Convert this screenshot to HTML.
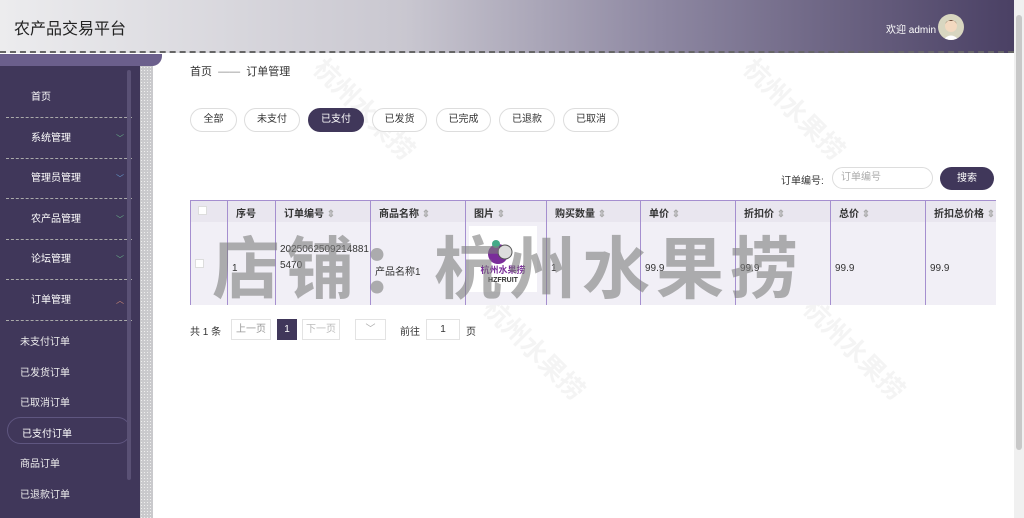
<!DOCTYPE html>
<html><head><meta charset="utf-8"><style>
*{margin:0;padding:0;box-sizing:border-box}
html,body{width:1024px;height:518px;overflow:hidden}
body{font-family:"Liberation Sans","Noto Sans CJK SC",sans-serif;background:#fff;position:relative;font-size:10px;color:#333}
.hdr{position:absolute;left:0;top:0;width:1014px;height:53px;background:linear-gradient(90deg,#ececee 0%,#c9c7d0 40%,#8e88a2 65%,#4a4064 100%);border-bottom:2px dashed #666}
.hdr .t{position:absolute;left:14px;top:15px;font-size:16px;color:#222}
.hdr .w{position:absolute;left:886px;top:21px;font-size:10px;color:#fff}
.av{position:absolute;left:938px;top:14px;width:26px;height:26px;border-radius:50%;background:#d8d6c0;overflow:hidden}
.sb{position:absolute;right:0;top:0;width:10px;height:518px;background:#f0f0f0}
.sb i{position:absolute;left:2px;top:15px;width:6px;height:435px;background:#c8c8c8;border-radius:3px}
.side{position:absolute;left:0;top:55px;width:140px;height:463px;background:#40375a;overflow:hidden}
.tab{position:absolute;left:0;top:54px;width:162px;height:12px;background:#6b5f8c;border-radius:0 0 10px 0}
.strip{position:absolute;left:140px;top:66px;width:13px;height:452px;background:#c9c9cc;background-image:radial-gradient(#eee 0.6px,transparent 0.8px);background-size:3px 3px}
.mi{position:absolute;left:6px;width:126px;height:40px;border-bottom:1px dashed #aaa;color:#fff;font-size:10px;padding-left:25px;line-height:40px}
.mi b{position:absolute;right:8px;font-weight:normal;color:#6a8;font-size:8px}
.si{position:absolute;left:20px;color:#eee;font-size:10px}
.sscroll{position:absolute;left:127px;top:15px;width:4px;height:410px;background:#5a5175;border-radius:2px}
.bc{position:absolute;left:190px;top:63px;font-size:11px;color:#333}
.pill{position:absolute;top:108px;height:24px;border:1px solid #ddd;border-radius:12px;font-size:10px;line-height:22px;text-align:center;background:#fff}
.pill.on{background:#40375a;color:#fff;border-color:#40375a}
.cell{position:absolute;border-left:1px solid #a58fcf;font-size:10px;padding-left:8px}
.cell .h{margin-top:5px;font-weight:bold;white-space:nowrap}
.wm{position:absolute;left:212px;top:214px;font-size:68px;font-weight:bold;color:rgba(125,125,125,.6);letter-spacing:6px;white-space:nowrap}
.fw{position:absolute;font-size:26px;font-weight:bold;color:rgba(170,170,170,.13);transform:rotate(45deg);white-space:nowrap}
.pg{position:absolute;top:319px;height:21px;border:1px solid #e3e3e3;font-size:10px;line-height:19px;text-align:center;color:#999;background:#fff}
</style></head><body>
<div class="hdr"><div class="t">农产品交易平台</div><div class="w">欢迎 admin</div>
<div class="av"><svg width="26" height="26"><circle cx="13" cy="12" r="6" fill="#f3d9c0"/><path d="M7 10 Q13 2 19 10 Q17 6 13 7 Q9 6 7 10Z" fill="#5a3a2a"/><path d="M5 26 Q13 17 21 26Z" fill="#fff"/></svg></div></div>
<div class="sb"><i></i></div>
<div class="side">
<div class="mi" style="top:23px">首页</div>
<div class="mi" style="top:64px">系统管理<b>﹀</b></div>
<div class="mi" style="top:104px">管理员管理<b style="color:#69c">﹀</b></div>
<div class="mi" style="top:145px">农产品管理<b>﹀</b></div>
<div class="mi" style="top:185px">论坛管理<b>﹀</b></div>
<div class="mi" style="top:226px">订单管理<b style="color:#c87">︿</b></div>
<div class="si" style="top:278px">未支付订单</div>
<div class="si" style="top:309px">已发货订单</div>
<div class="si" style="top:339px">已取消订单</div>
<div style="position:absolute;left:7px;top:362px;width:124px;height:27px;border:1px solid #5f5680;border-radius:14px"></div>
<div class="si" style="top:370px;left:22px;color:#fff">已支付订单</div>
<div class="si" style="top:400px">商品订单</div>
<div class="si" style="top:431px">已退款订单</div>
<div class="sscroll"></div>
</div>
<div class="tab"></div>
<div class="strip"></div>
<div class="fw" style="left:300px;top:90px">杭州水果捞</div>
<div class="fw" style="left:730px;top:90px">杭州水果捞</div>
<div class="fw" style="left:470px;top:330px">杭州水果捞</div>
<div class="fw" style="left:790px;top:330px">杭州水果捞</div>
<div class="bc">首页 <span style="color:#888">&nbsp;——&nbsp;</span> 订单管理</div>
<div class="pill" style="left:190px;width:47px">全部</div>
<div class="pill" style="left:244px;width:56px">未支付</div>
<div class="pill on" style="left:308px;width:56px">已支付</div>
<div class="pill" style="left:372px;width:55px">已发货</div>
<div class="pill" style="left:436px;width:55px">已完成</div>
<div class="pill" style="left:499px;width:56px">已退款</div>
<div class="pill" style="left:563px;width:56px">已取消</div>
<div style="position:absolute;left:781px;top:172px;font-size:10px">订单编号:</div>
<div style="position:absolute;left:832px;top:167px;width:101px;height:22px;border:1px solid #ddd;border-radius:11px;font-size:10px;color:#aaa;line-height:20px;padding-left:8px">订单编号</div>
<div style="position:absolute;left:940px;top:167px;width:54px;height:23px;background:#40375a;border-radius:12px;color:#fff;font-size:10px;line-height:23px;text-align:center">搜索</div>
<div style="position:absolute;left:190px;top:200px;width:824px;height:22px;background:#e9e6ef;border-top:1px solid #a58fcf"></div>
<div style="position:absolute;left:190px;top:222px;width:824px;height:83px;background:#f1eff6"></div>
<div style="position:absolute;left:198px;top:206px;width:9px;height:9px;background:#fff;border:1px solid #ddd"></div>
<div style="position:absolute;left:195px;top:259px;width:9px;height:9px;background:#fff;border:1px solid #ddd"></div>
<div class="cell" style="left:190px;top:200px;height:105px"></div>
<div class="cell" style="left:227px;top:200px;height:105px"><div class="h">序号</div><div style="margin-top:43px;margin-left:-4px">1</div></div>
<div class="cell" style="left:275px;top:200px;height:105px"><div class="h">订单编号 <span style="color:#aaa">⇕</span></div><div style="margin-top:22px;line-height:16px;margin-left:-4px;width:92px;word-break:break-all">20250625092148815470</div></div>
<div class="cell" style="left:370px;top:200px;height:105px"><div class="h">商品名称 <span style="color:#aaa">⇕</span></div><div style="margin-top:43px;margin-left:-4px">产品名称1</div></div>
<div class="cell" style="left:465px;top:200px;height:105px;width:81px"><div class="h">图片 <span style="color:#aaa">⇕</span></div>
<div style="position:absolute;left:3px;top:26px;width:68px;height:66px;background:#fff"><svg width="68" height="66"><circle cx="29" cy="28" r="10" fill="#7a2d9a"/><circle cx="36" cy="26" r="7" fill="#ddd" stroke="#555"/><circle cx="27" cy="18" r="4" fill="#4a8"/><text x="34" y="47" font-size="9" font-weight="bold" fill="#7a2d9a" text-anchor="middle">杭州水果捞</text><text x="34" y="56" font-size="7" font-weight="bold" fill="#333" text-anchor="middle">HZFRUIT</text></svg></div></div>
<div class="cell" style="left:546px;top:200px;height:105px"><div class="h">购买数量 <span style="color:#aaa">⇕</span></div><div style="margin-top:43px;margin-left:-4px">1</div></div>
<div class="cell" style="left:640px;top:200px;height:105px"><div class="h">单价 <span style="color:#aaa">⇕</span></div><div style="margin-top:43px;margin-left:-4px">99.9</div></div>
<div class="cell" style="left:735px;top:200px;height:105px"><div class="h">折扣价 <span style="color:#aaa">⇕</span></div><div style="margin-top:43px;margin-left:-4px">99.9</div></div>
<div class="cell" style="left:830px;top:200px;height:105px"><div class="h">总价 <span style="color:#aaa">⇕</span></div><div style="margin-top:43px;margin-left:-4px">99.9</div></div>
<div class="cell" style="left:925px;top:200px;height:105px;width:89px;overflow:hidden"><div class="h">折扣总价格 <span style="color:#aaa">⇕</span></div><div style="margin-top:43px;margin-left:-4px">99.9</div></div>
<div style="position:absolute;left:996px;top:198px;width:18px;height:110px;background:#fff"></div>
<div class="wm">店铺：杭州水果捞</div>
<div style="position:absolute;left:190px;top:323px;font-size:10px">共 1 条</div>
<div class="pg" style="left:231px;width:40px">上一页</div>
<div class="pg" style="left:277px;width:20px;background:#40375a;color:#fff;border-color:#40375a">1</div>
<div class="pg" style="left:302px;width:38px;color:#bbb">下一页</div>
<div class="pg" style="left:355px;width:31px;color:#aaa">﹀</div>
<div style="position:absolute;left:400px;top:323px;font-size:10px">前往</div>
<div class="pg" style="left:426px;width:34px;color:#333">1</div>
<div style="position:absolute;left:466px;top:323px;font-size:10px">页</div>
</body></html>
